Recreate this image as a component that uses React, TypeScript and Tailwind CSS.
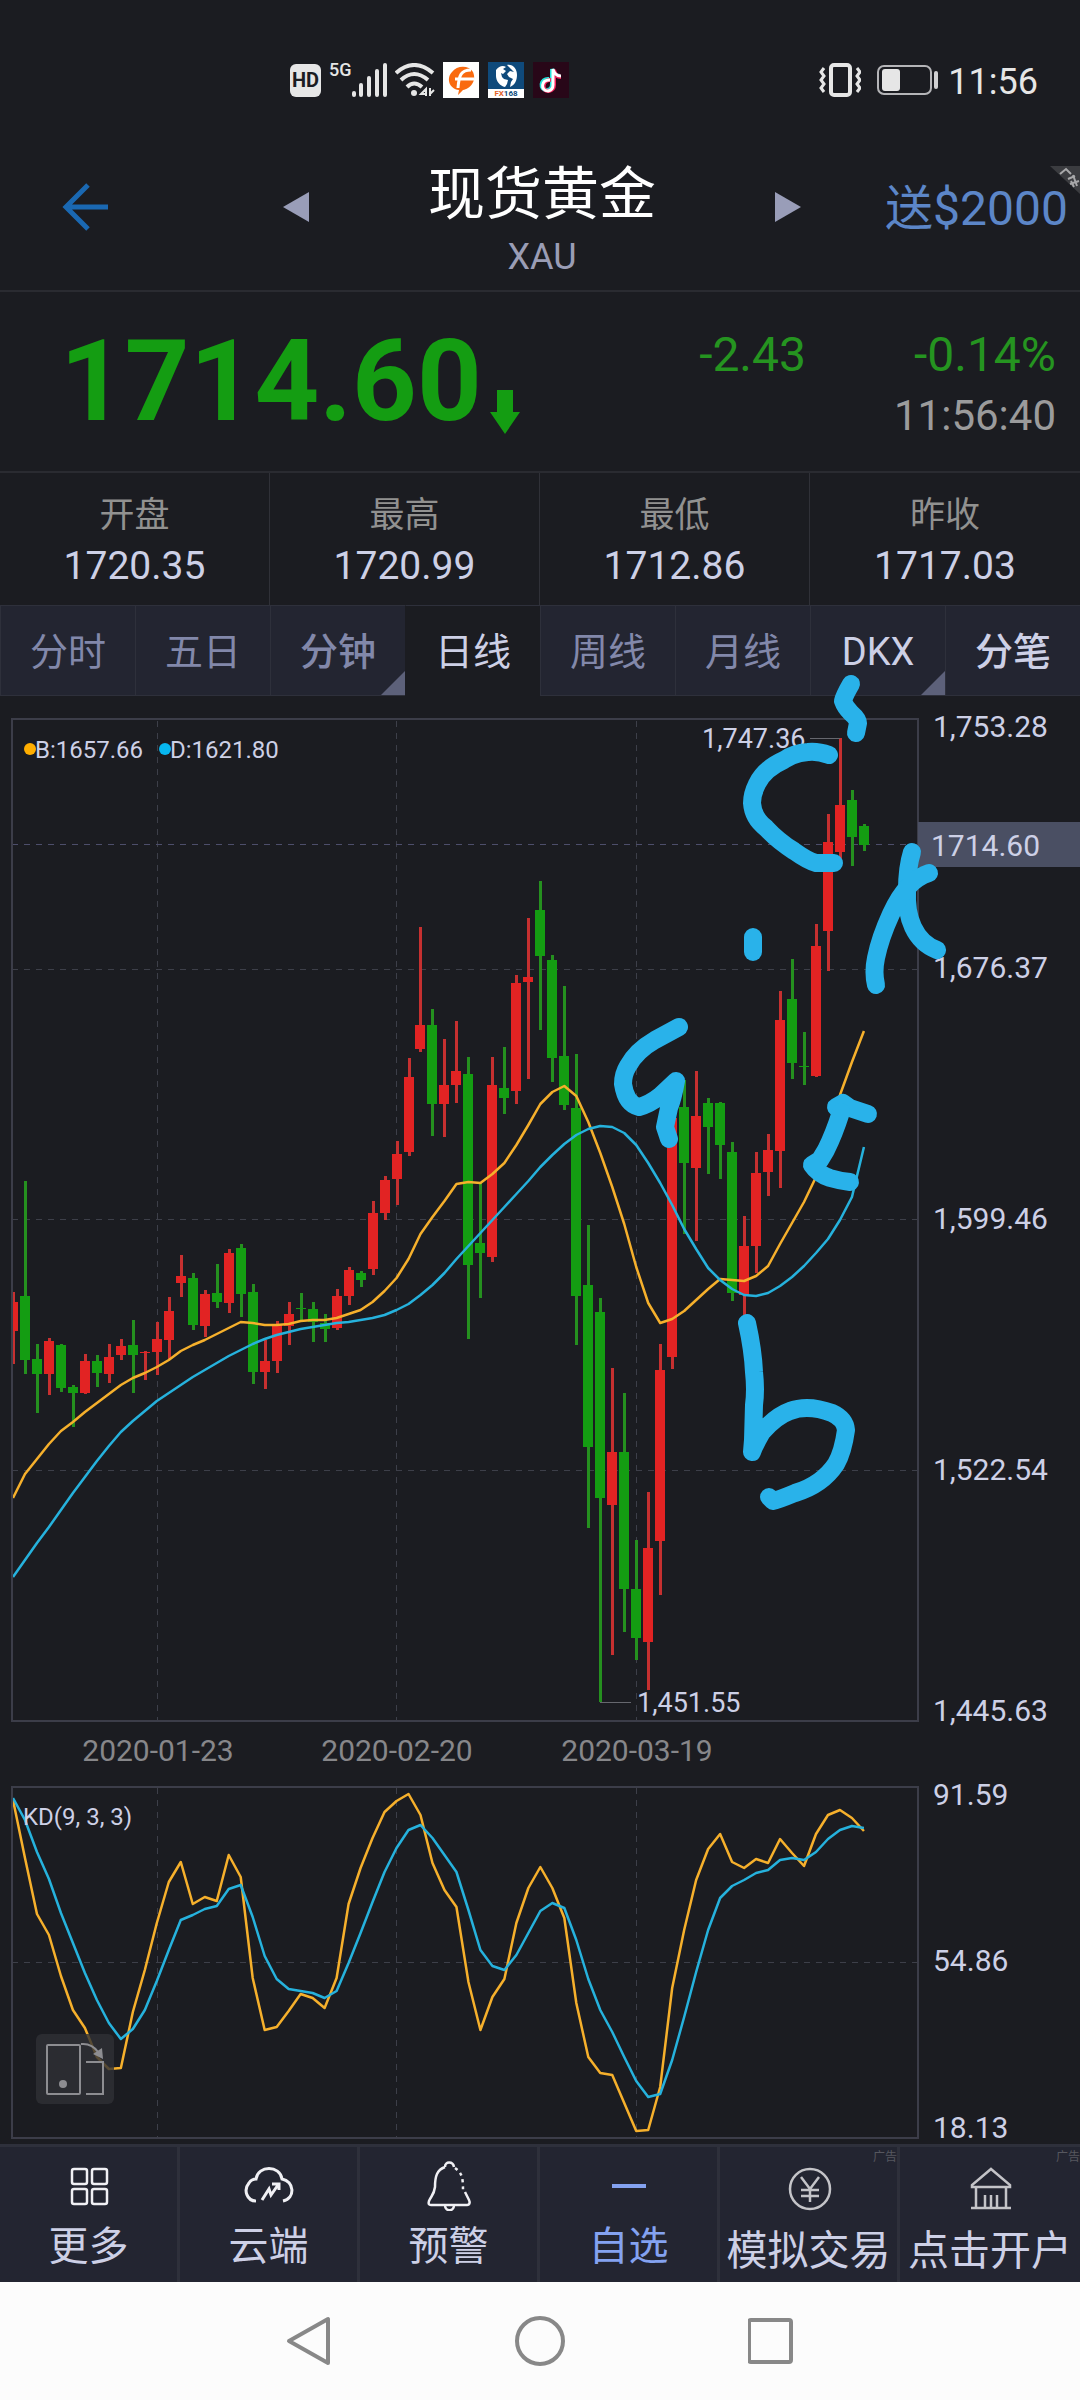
import type { ReactNode } from 'react'
import clsx from 'clsx'

type Candle = ['r' | 'g', number, number, number, number]

// [color, high, body top, body bottom, low] in plot units, one entry per trading day
const candles: Candle[] = [
  ['r', 1292, 1302, 1331, 1364], ['g', 1181, 1296, 1360, 1374], ['g', 1344, 1359, 1374, 1413], ['r', 1338, 1341, 1374, 1395],
  ['g', 1344, 1345, 1388, 1392], ['g', 1385, 1387, 1393, 1427], ['r', 1354, 1361, 1393, 1394], ['g', 1355, 1361, 1373, 1387],
  ['r', 1344, 1357, 1374, 1383], ['r', 1339, 1346, 1355, 1360], ['g', 1320, 1345, 1355, 1393], ['r', 1351, 1352, 1353, 1380],
  ['r', 1322, 1339, 1352, 1375], ['r', 1297, 1311, 1340, 1360], ['r', 1255, 1276, 1283, 1297], ['g', 1273, 1278, 1325, 1330],
  ['r', 1290, 1294, 1326, 1337], ['g', 1264, 1293, 1302, 1308], ['r', 1249, 1253, 1303, 1313], ['g', 1244, 1248, 1294, 1317],
  ['g', 1284, 1292, 1372, 1384], ['r', 1340, 1361, 1372, 1389], ['r', 1321, 1325, 1361, 1373], ['r', 1302, 1314, 1326, 1345],
  ['g', 1293, 1308, 1309, 1320], ['g', 1302, 1309, 1322, 1342], ['g', 1314, 1323, 1329, 1342], ['r', 1289, 1296, 1328, 1330],
  ['r', 1267, 1270, 1296, 1305], ['g', 1271, 1273, 1280, 1287], ['r', 1201, 1213, 1269, 1275], ['r', 1176, 1180, 1213, 1220],
  ['r', 1141, 1154, 1179, 1205], ['r', 1058, 1077, 1152, 1156], ['r', 927, 1025, 1049, 1052], ['g', 1009, 1025, 1104, 1136],
  ['r', 1039, 1085, 1104, 1137], ['r', 1021, 1071, 1085, 1103], ['g', 1057, 1074, 1265, 1339], ['g', 1183, 1243, 1253, 1298],
  ['r', 1057, 1085, 1257, 1262], ['g', 1047, 1088, 1098, 1114], ['r', 975, 983, 1091, 1104], ['r', 918, 977, 982, 1079],
  ['g', 881, 910, 956, 1030], ['g', 955, 960, 1058, 1082], ['g', 986, 1056, 1105, 1110], ['g', 1054, 1108, 1296, 1345],
  ['g', 1225, 1285, 1447, 1528], ['g', 1298, 1312, 1498, 1702], ['r', 1368, 1452, 1505, 1655], ['g', 1393, 1452, 1589, 1632],
  ['g', 1540, 1589, 1638, 1660], ['r', 1492, 1548, 1642, 1690], ['r', 1344, 1370, 1541, 1595], ['r', 1112, 1118, 1357, 1369],
  ['g', 1080, 1107, 1163, 1234], ['r', 1071, 1116, 1168, 1241], ['g', 1098, 1103, 1127, 1174], ['g', 1102, 1103, 1145, 1179],
  ['g', 1142, 1152, 1293, 1301], ['r', 1216, 1246, 1295, 1320], ['r', 1152, 1173, 1246, 1273], ['r', 1134, 1150, 1172, 1196],
  ['r', 991, 1020, 1151, 1188], ['g', 959, 999, 1063, 1079], ['g', 1032, 1066, 1067, 1085], ['r', 924, 946, 1076, 1077],
  ['r', 814, 842, 931, 971], ['r', 738, 805, 852, 860], ['g', 790, 800, 837, 866], ['g', 824, 826, 845, 851],
]

const lineB = [
  1498, 1474, 1459, 1444, 1431, 1422, 1412, 1403, 1394, 1385, 1378, 1373, 1367, 1360, 1351, 1345, 1340, 1334, 1328, 1322, 1323, 1325,
  1325, 1324, 1321, 1320, 1320, 1318, 1314, 1310, 1302, 1291, 1278, 1259, 1234, 1217, 1201, 1184, 1182, 1183, 1174, 1163, 1145, 1125,
  1104, 1092, 1086, 1096, 1122, 1153, 1187, 1224, 1267, 1303, 1323, 1319, 1311, 1300, 1289, 1279, 1280, 1281, 1276, 1266, 1244, 1223,
  1202, 1177, 1140, 1095, 1062, 1031,
]

const lineD = [
  1577, 1560, 1543, 1527, 1510, 1493, 1477, 1461, 1446, 1432, 1421, 1411, 1401, 1393, 1385, 1377, 1370, 1363, 1356, 1350, 1344, 1339,
  1335, 1332, 1329, 1327, 1325, 1323, 1322, 1320, 1318, 1315, 1310, 1304, 1295, 1285, 1273, 1259, 1246, 1233, 1220, 1207, 1194, 1181,
  1167, 1155, 1144, 1135, 1129, 1126, 1127, 1133, 1145, 1163, 1183, 1205, 1229, 1249, 1268, 1280, 1289, 1295, 1296, 1293, 1286, 1277,
  1266, 1253, 1239, 1220, 1197, 1147,
]

const kdK = [
  1800, 1858, 1914, 1935, 1976, 2010, 2028, 2057, 2069, 2068, 2012, 1970, 1923, 1882, 1862, 1904, 1897, 1901, 1855, 1877, 1978, 2030,
  2027, 2011, 1994, 1998, 2008, 1978, 1904, 1868, 1838, 1812, 1801, 1794, 1815, 1863, 1890, 1907, 1982, 2030, 1997, 1979, 1923, 1888,
  1867, 1888, 1918, 2003, 2057, 2073, 2075, 2103, 2131, 2130, 2087, 1988, 1930, 1880, 1849, 1834, 1862, 1868, 1859, 1863, 1839, 1853,
  1866, 1834, 1815, 1810, 1818, 1831,
]

const kdD = [
  1798, 1820, 1852, 1879, 1913, 1943, 1973, 2000, 2023, 2039, 2029, 2010, 1981, 1950, 1920, 1915, 1909, 1906, 1889, 1885, 1917, 1956,
  1979, 1989, 1991, 1993, 1998, 1991, 1963, 1933, 1902, 1872, 1848, 1830, 1825, 1838, 1855, 1872, 1910, 1950, 1966, 1970, 1955, 1933,
  1911, 1903, 1908, 1940, 1979, 2010, 2032, 2057, 2081, 2097, 2094, 2060, 2017, 1972, 1930, 1898, 1886, 1880, 1873, 1870, 1860, 1858,
  1860, 1852, 1839, 1830, 1826, 1828,
]

// freehand marks drawn over the chart
const marks = [
  'M851 684 Q844 696 843 701 Q845 707 851 713 Q858 719 858 723 L856 733',
  'M829 755 Q818 751 808 752 Q794 753 784 760 Q764 769 757 784 Q752 794 752 803 Q753 818 766 828 Q778 841 794 851 Q808 861 816 863 L834 863',
  'M753 937 V952',
  'M912 852 Q907 868 907 890 Q906 912 913 927 Q921 944 937 950',
  'M929 873 Q917 877 909 886 Q899 896 891 914 Q880 938 876 958 Q873 972 876 985',
  'M679 1027 L655 1040 Q636 1051 628 1066 Q623 1074 623 1084 Q626 1104 639 1107 Q650 1104 660 1096 L676 1081 Q673 1098 669 1108 L665 1127 L669 1139',
  'M836 1107 L843 1103 L850 1108 L868 1114',
  'M841 1112 Q834 1134 826 1150 L820 1160 L812 1165 Q818 1174 830 1178 Q840 1181 850 1182',
  'M747 1323 Q753 1350 754 1372 Q756 1390 754 1405 L753 1440 L752 1452 Q755 1444 762 1432 Q776 1416 790 1411 Q808 1404 832 1413 Q845 1419 846 1430 Q843 1452 836 1464 Q822 1485 795 1493 Q778 1500 773 1501 L769 1497',
]

const gridX = [158, 397, 637]

const cx = (i: number) => 13 + 11.985 * i
const points = (ys: number[]) => ys.map((y, i) => `${cx(i)},${y}`).join(' ')

function Candlestick({ candle, index }: { candle: Candle; index: number }) {
  const [color, high, top, bottom, low] = candle
  const x = Math.round(cx(index))
  return (
    <g>
      <rect x={x - 1} y={high} width={3} height={low - high} className={color === 'r' ? 'fill-[#c63030]' : 'fill-[#25901f]'} />
      <rect x={x - 5} y={top} width={10} height={bottom - top} className={color === 'r' ? 'fill-[#e22323]' : 'fill-[#149d12]'} />
    </g>
  )
}

function Chart() {
  return (
    <svg viewBox="0 696 1080 1448" className="relative z-10 block h-auto w-full overflow-visible" role="img" aria-label="XAU">
      <defs>
        <clipPath id="plot">
          <rect x={12} y={719} width={906} height={1420} />
        </clipPath>
      </defs>

      <g className="fill-none stroke-[#3d3f49]" strokeDasharray="6 6" strokeWidth={1}>
        {gridX.map((x) => (
          <g key={x}>
            <path d={`M${x - 0.5} 721 V1720`} />
            <path d={`M${x - 0.5} 1788 V2137`} />
          </g>
        ))}
        {[969, 1219, 1470, 1962].map((y) => (
          <path key={y} d={`M12 ${y + 0.5} H918`} />
        ))}
      </g>
      <path d="M12 844.5 H918" strokeDasharray="6 6" className="stroke-[#4d4e6b]" />

      <g clipPath="url(#plot)">
        {candles.map((c, i) => (
          <Candlestick key={i} candle={c} index={i} />
        ))}
        <g className="fill-none" strokeWidth={2.5} strokeLinejoin="round">
          <polyline points={points(lineB)} className="stroke-[#f6b02c]" />
          <polyline points={points(lineD)} className="stroke-[#26b2dd]" />
          <polyline points={points(kdK)} className="stroke-[#f6b02c]" />
          <polyline points={points(kdD)} className="stroke-[#26b2dd]" />
        </g>
      </g>

      <g className="fill-none stroke-[#3c3d49]" strokeWidth={2}>
        <rect x={12} y={719} width={906} height={1002} />
        <rect x={12} y={1787} width={906} height={351} />
      </g>

      <path d="M810 738.5 H840 M600 1702.5 H631" className="stroke-[#66676e]" />
      <g className="fill-[#cdd0e6] text-[27px]">
        <text x={702} y={748}>1,747.36</text>
        <text x={637} y={1712}>1,451.55</text>
      </g>
      <circle cx={30} cy={749} r={6} className="fill-[#ffae00]" />
      <circle cx={165} cy={749} r={6} className="fill-[#07b7f0]" />
      <g className="fill-[#cdd0e6] text-2xl">
        <text x={35} y={758}>B:1657.66</text>
        <text x={170} y={758}>D:1621.80</text>
        <text x={23} y={1825}>KD(9, 3, 3)</text>
      </g>

      <rect x={918} y={822} width={162} height={45} className="fill-[#4a4f63]" />
      <g className="fill-[#cdd0e6] text-[30px]">
        <text x={931} y={856}>1714.60</text>
        <text x={933} y={737}>1,753.28</text>
        <text x={933} y={978}>1,676.37</text>
        <text x={933} y={1229}>1,599.46</text>
        <text x={933} y={1480}>1,522.54</text>
        <text x={933} y={1721}>1,445.63</text>
        <text x={933} y={1805}>91.59</text>
        <text x={933} y={1971}>54.86</text>
        <text x={933} y={2138}>18.13</text>
      </g>
      <g className="fill-[#87878a] text-[30px]" textAnchor="middle">
        <text x={158} y={1761}>2020-01-23</text>
        <text x={397} y={1761}>2020-02-20</text>
        <text x={637} y={1761}>2020-03-19</text>
      </g>

      <g className="fill-none stroke-[#29b2ea]" strokeWidth={18} strokeLinecap="round" strokeLinejoin="round">
        {marks.map((d) => (
          <path key={d} d={d} />
        ))}
      </g>
    </svg>
  )
}

function StatusBar() {
  return (
    <div className="flex h-[104px] items-center justify-between pt-14 pr-[42px] pl-[290px]">
      <div className="flex items-center">
        <span className="flex h-[33px] w-[31px] items-center justify-center rounded-md bg-[#e6e6e6] text-xl font-bold text-[#1b1c21]">HD</span>
        <span className="ml-2 self-start text-lg leading-4 font-medium text-[#e6e6e6]">5G</span>
        <svg width="35" height="34" viewBox="0 0 35 34" className="fill-[#e6e6e6]">
          <rect x="0" y="28" width="4" height="6" rx="2" />
          <rect x="7" y="20" width="4" height="14" rx="2" />
          <rect x="15" y="13" width="4" height="21" rx="2" />
          <rect x="23" y="6" width="4" height="28" rx="2" />
          <rect x="31" y="0" width="4" height="34" rx="2" />
        </svg>
        <svg width="40" height="34" viewBox="0 0 40 34" className="ml-2 fill-none stroke-[#e6e6e6]" strokeWidth="4">
          <path d="M1 10 Q19 -6 38 10 M6 17 Q19 5 33 17 M12 24 Q19 17 27 24" />
          <circle cx="19" cy="30" r="3" className="fill-[#e6e6e6] stroke-none" />
          <path d="M31 33 V26 L26 31 H32 M35 25 V33 M35 31 L39 27" strokeWidth="2" />
        </svg>
        <svg width="36" height="36" viewBox="0 0 36 36" className="ml-2">
          <rect width="36" height="36" fill="#fff" />
          <path d="M15 33 L16 28 C6 27 3 16 9 10 C14 3 26 3 30 10 C34 19 27 27 20 28 Z" fill="#f96a10" />
          <path d="M12 17 H31 M15 26 C16 13 18 8 28 8" fill="none" stroke="#fff" strokeWidth="3" />
        </svg>
        <svg width="36" height="36" viewBox="0 0 36 36" className="ml-[9px]">
          <rect width="36" height="36" fill="#fff" />
          <rect width="36" height="27" fill="#0f4a7b" />
          <path d="M8 8 C11 4 15 3 18 5 L15 7 L18 9 L15 12 L13 11 L14 15 L16 17 L20 18 L19 22 L17 25 C12 24 8 19 8 14 Z" fill="#fff" />
          <path d="M19 3 C25 2 29 7 29 13 C29 18 27 23 22 25 L23 20 L25 17 L21 15 L19 12 L22 9 L26 10 L23 7 Z" fill="#fff" />
          <text x="18" y="34" textAnchor="middle" fontSize="8" fontWeight="700" fill="#0f4a7b">
            <tspan fill="#e2622a">FX</tspan>168
          </text>
        </svg>
        <svg width="36" height="36" viewBox="0 0 36 36" className="ml-[9px]">
          <rect width="36" height="36" fill="#280718" />
          <g fill="none" strokeWidth="4">
            <path d="M16 17 C7 16 6 28 14 28 C18 28 19 25 19 22 V7 C20 12 23 14 27 14" stroke="#25e4dc" />
            <path d="M18 18 C9 17 8 30 16 29 C20 28 21 26 21 23 V8 C22 13 25 15 28 15" stroke="#f3235a" />
            <path d="M17 18 C8 17 7 29 15 29 C19 28 20 26 20 23 V7 C21 12 24 14 28 14" stroke="#fff" strokeWidth="3" />
          </g>
        </svg>
      </div>
      <div className="flex items-center">
        <svg width="42" height="34" viewBox="0 0 42 34" className="fill-none stroke-[#e6e6e6]" strokeWidth="3">
          <rect x="12" y="2" width="19" height="30" rx="3" strokeWidth="4" />
          <path d="M5 5 L2 9 L5 13 L2 17 L5 21 L2 25 L5 29 M38 5 L41 9 L38 13 L41 17 L38 21 L41 25 L38 29" />
        </svg>
        <svg width="61" height="30" viewBox="0 0 61 30" className="ml-4">
          <rect x="1" y="1" width="53" height="28" rx="6" fill="none" stroke="#b5b5b8" strokeWidth="2" />
          <rect x="5" y="4" width="18" height="22" rx="3" fill="#e6e6e6" />
          <rect x="57" y="6" width="4" height="18" rx="2" fill="#d0d0d2" />
        </svg>
        <span className="ml-2.5 pt-1 text-4xl leading-9 text-[#e6e6e6]">11:56</span>
      </div>
    </div>
  )
}

function Header() {
  return (
    <header className="relative grid h-[188px] grid-cols-[1fr_520px_1fr] items-center border-b-2 border-[#2a2b31] pt-5">
      <button type="button" aria-label="返回" className="ml-[60px] w-fit">
        <svg width="50" height="50" viewBox="0 0 50 50" fill="none" stroke="#1a68b2" strokeWidth="5">
          <path d="M28 3 L6 25 L28 47 M5 25 H48" />
        </svg>
      </button>
      <div className="flex items-center justify-between">
        <button type="button" aria-label="上一个">
          <svg width="30" height="32" viewBox="0 0 30 32">
            <path d="M3 16 L29 1 V31 Z" fill="#999db8" />
          </svg>
        </button>
        <div className="pt-7 text-center">
          <h1 className="text-[57px] leading-[64px] text-white">现货黄金</h1>
          <p className="pt-2 text-4xl leading-11 text-[#9a9db5]">XAU</p>
        </div>
        <button type="button" aria-label="下一个" className="-mr-1">
          <svg width="30" height="32" viewBox="0 0 30 32">
            <path d="M27 16 L1 1 V31 Z" fill="#999db8" />
          </svg>
        </button>
      </div>
      <a href="#bonus" className="justify-self-end pt-1 pr-3 text-5xl leading-[60px] text-[#5c86c8]">送$2000</a>
      {/* folded corner of the ad link */}
      <svg width="30" height="28" viewBox="0 0 30 28" className="absolute top-[62px] right-0">
        <path d="M0 0 H30 V28 Z" fill="#3b3c40" />
        <path d="M10 8 L16 3 L21 8 M18 13 L25 10 M20 18 L29 15 M23 9 L27 20 M21 15 L24 21" fill="none" stroke="#a8a8aa" strokeWidth="2" />
      </svg>
    </header>
  )
}

function Quote() {
  return (
    <section className="flex h-[181px] items-center justify-between border-b-2 border-[#2a2b31] pr-6 pl-[60px]">
      <div className="flex items-end text-[#149d12]">
        <span className="text-[113px] leading-[120px] font-bold">1714.60</span>
        <svg width="30" height="44" viewBox="0 0 30 44" className="mb-2 ml-2 fill-current">
          <path d="M7 0 H23 V22 H30 L15 44 L0 22 H7 Z" />
        </svg>
      </div>
      <div className="pt-2 text-right">
        <div className="flex justify-end gap-27 text-5xl leading-[60px] text-[#259420]">
          <span>-2.43</span>
          <span>-0.14%</span>
        </div>
        <p className="text-[42px] leading-[62px] text-[#9b9b9c]">11:56:40</p>
      </div>
    </section>
  )
}

const stats = [
  ['开盘', '1720.35'],
  ['最高', '1720.99'],
  ['最低', '1712.86'],
  ['昨收', '1717.03'],
]

function Stats() {
  return (
    <dl className="grid grid-cols-4 divide-x divide-[#303138] text-center">
      {stats.map(([label, value]) => (
        <div key={label} className="pt-[18px] pb-3.5">
          <dt className="text-[35px] leading-[50px] text-[#919190]">{label}</dt>
          <dd className="text-[39px] leading-[50px] text-[#cdd0e6]">{value}</dd>
        </div>
      ))}
    </dl>
  )
}

const tabs = [
  { label: '分时' },
  { label: '五日' },
  { label: '分钟', menu: true, bold: true },
  { label: '日线', active: true, bright: true },
  { label: '周线' },
  { label: '月线' },
  { label: 'DKX', menu: true, bright: true },
  { label: '分笔', bright: true, bold: true },
]

function Tabs() {
  return (
    <div role="tablist" className="grid grid-cols-8">
      {tabs.map((tab) => (
        <button
          key={tab.label}
          type="button"
          role="tab"
          aria-selected={!!tab.active}
          className={clsx(
            'relative h-[91px] border-y border-l pt-1 text-[38px]',
            tab.active ? 'border-[#1b1c21] border-t-[#2e303b] bg-[#1b1c21]' : 'border-[#2e303b] bg-[#232531]',
            tab.bright ? 'text-[#cdd0e6]' : 'text-[#8288aa]',
            tab.bold && 'font-medium'
          )}
        >
          {tab.label}
          {tab.menu && (
            <svg width="24" height="24" viewBox="0 0 24 24" className="absolute right-0 bottom-0">
              <path d="M24 0 V24 H0 Z" fill="#5d617a" />
            </svg>
          )}
        </button>
      ))}
    </div>
  )
}

function NavItem({ label, ad, active, children }: { label: string; ad?: boolean; active?: boolean; children: ReactNode }) {
  return (
    <button type="button" className="relative flex min-w-0 flex-col items-center pt-3">
      <svg width="52" height="52" viewBox="0 0 52 52" fill="none" stroke={ad ? '#c4c4c8' : '#f0f0f4'} strokeWidth="2.5">
        {children}
      </svg>
      <span
        className={clsx(
          'leading-[52px] whitespace-nowrap',
          ad ? 'pt-3.5 text-[41px]' : 'pt-2.5 text-[40px]',
          active ? 'text-[#84a2f0]' : 'text-[#cdd0e6]'
        )}
      >
        {label}
      </span>
      {ad && <span className="absolute top-0.5 right-0 text-xs leading-4 text-[#56575f]">广告</span>}
    </button>
  )
}

function BottomNav() {
  return (
    <nav className="grid h-[138px] grid-cols-6 divide-x-3 divide-[#2e303b] border-t-3 border-[#2e303b] bg-[#232531]">
      <NavItem label="更多">
        <rect x="9" y="10" width="15" height="15" rx="2" />
        <rect x="29" y="10" width="15" height="15" rx="2" />
        <rect x="9" y="30" width="15" height="15" rx="2" />
        <rect x="29" y="30" width="15" height="15" rx="2" />
      </NavItem>
      <NavItem label="云端">
        <path d="M13 42 C4 42 0 31 6 24 C8 21 11 20 13 20 C15 6 37 6 39 20 C51 22 53 39 40 42" strokeWidth="3" />
        <path d="M19 41 L26 30 L28 36 L35 26 M29 25 H36 V31" strokeWidth="3" />
      </NavItem>
      <NavItem label="预警">
        <path d="M22 8 C22 2 30 2 31 8 M22 8 C14 11 12 17 12 28 C11 36 8 37 6 42 C5 45 6 46 8 46 H44 C47 46 47 43 46 41 L42 33" />
        <path d="M32 9 C39 14 40 18 40 32" strokeDasharray="3 4" />
        <path d="M22 46 C22 53 31 53 31 46" />
      </NavItem>
      <NavItem label="自选" active>
        <path d="M9 27 H43" stroke="#84a2f0" strokeWidth="4" />
      </NavItem>
      <NavItem label="模拟交易" ad>
        <circle cx="27" cy="30" r="20" />
        <path d="M18 18 L27 30 L36 18 M27 30 V43 M18 31 H36 M18 37 H36" />
      </NavItem>
      <NavItem label="点击开户" ad>
        <path d="M27 10 L46 26 V28 H8 V26 Z M7 49 H47 M12 28 V48 M42 28 V48 M21 48 V36 M27 48 V36 M33 48 V36" />
      </NavItem>
    </nav>
  )
}

function SystemNav() {
  return (
    <div className="grid grid-cols-[1fr_460px_1fr] bg-[#fcfcfc] pt-[33px] pb-[33px]">
      <div className="col-start-2 flex justify-between">
        <button type="button" aria-label="Back" className="-ml-6">
          <svg width="46" height="52" viewBox="0 0 46 52" fill="none" stroke="#888" strokeWidth="4" strokeLinejoin="round">
            <path d="M42 4 V48 L3 26 Z" />
          </svg>
        </button>
        <button type="button" aria-label="Home">
          <svg width="52" height="52" viewBox="0 0 52 52" fill="none" stroke="#888" strokeWidth="4">
            <circle cx="26" cy="26" r="23" />
          </svg>
        </button>
        <button type="button" aria-label="Recents" className="-mr-6">
          <svg width="46" height="52" viewBox="0 0 46 52" fill="none" stroke="#888" strokeWidth="4" strokeLinejoin="round">
            <rect x="1" y="5" width="42" height="42" rx="2" />
          </svg>
        </button>
      </div>
    </div>
  )
}

export default function App() {
  return (
    <div className="min-h-screen bg-[#1b1c21] font-[Roboto,'Noto_Sans_CJK_SC',sans-serif]">
      <StatusBar />
      <Header />
      <Quote />
      <Stats />
      <Tabs />
      <main className="relative">
        <Chart />
        <button type="button" aria-label="横屏" className="absolute bottom-10 left-9 z-20 rounded-md bg-[#303136]/80">
          <svg width="78" height="70" viewBox="0 0 78 70" fill="none" stroke="#8d8d91" strokeWidth="2">
            <rect x="11" y="11" width="33" height="49" rx="1" />
            <path d="M50 28 H67 V60 H50 M45 10 Q56 9 62 18" />
            <circle cx="27" cy="50" r="4" fill="#8d8d91" stroke="none" />
            <path d="M57 20 L66 14 L67 25 Z" fill="#8d8d91" stroke="none" />
          </svg>
        </button>
      </main>
      <BottomNav />
      <SystemNav />
    </div>
  )
}
